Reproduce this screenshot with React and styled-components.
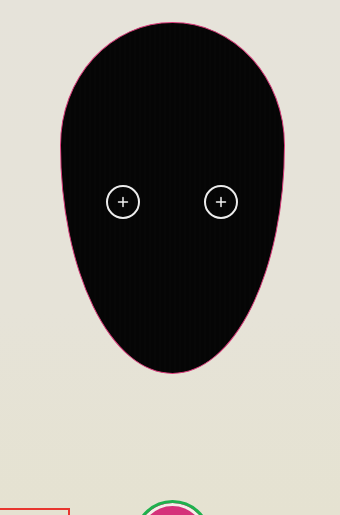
import { createGlobalStyle, styled } from "styled-components";

const GlobalStyle = createGlobalStyle`
   html, body {
      margin: 0;
      padding: 0;
      height: 515px;
      overflow: hidden;
      font-family: "Liberation Sans", Arial, sans-serif;
   }

   body {
      background: linear-gradient(180deg, #e6e3da 0%, #e6e3d8 60%, #e5e2d1 100%);
   }
`;

const PlusIcon = () => (
   <svg width="12" height="12" viewBox="0 0 12 12" fill="none">
      <path
         d="M6 1.5v9M1.5 6h9"
         stroke="#f2f2f2"
         strokeWidth="1.5"
         strokeLinecap="round"
      />
   </svg>
);

const App = () => {
   return (
      <>
         <GlobalStyle />
         <Stage>
            <Face>
               <EyeRow>
                  <Eye>
                     <PlusIcon />
                  </Eye>
                  <Eye>
                     <PlusIcon />
                  </Eye>
               </EyeRow>
            </Face>
            <Controls>
               <Palette />
               <RecordButton aria-label="record" />
               <span />
            </Controls>
         </Stage>
      </>
   );
};

export default App;

//style

const Stage = styled.main`
   width: 340px;
   height: 515px;
   display: flex;
   flex-direction: column;
   align-items: center;
   padding-top: 22px;
   box-sizing: border-box;
   overflow: hidden;
`;

const Face = styled.div`
   width: 225px;
   height: 352px;
   margin-left: 5px;
   flex-shrink: 0;
   box-sizing: border-box;
   border: 1px solid #d63a78;
   border-radius: 50% / 35% 35% 65% 65%;
   background: repeating-linear-gradient(
      90deg,
      #050505 0px,
      #050505 3px,
      #070707 3px,
      #070707 5px
   );
`;

const EyeRow = styled.div`
   display: flex;
   justify-content: center;
   gap: 64px;
   padding-top: 162px;
   padding-right: 1px;
`;

const Eye = styled.div`
   width: 34px;
   height: 34px;
   box-sizing: border-box;
   border: 2px solid #ececec;
   border-radius: 50%;
   display: flex;
   align-items: center;
   justify-content: center;
`;

const Controls = styled.div`
   width: 340px;
   margin-top: 126px;
   padding-left: 5px;
   box-sizing: border-box;
   display: grid;
   grid-template-columns: 1fr auto 1fr;
   align-items: start;
`;

const Palette = styled.div`
   justify-self: start;
   width: 78px;
   height: 60px;
   margin-left: -13px;
   margin-top: 8px;
   box-sizing: border-box;
   border: 2px solid #e8362f;
`;

const RecordButton = styled.button`
   width: 77px;
   height: 77px;
   padding: 0;
   box-sizing: border-box;
   border: 3px solid #1fb14d;
   border-radius: 50%;
   background: #d5317a;
   box-shadow: inset 0 0 0 3px #f3efe8;
   cursor: pointer;
`;
